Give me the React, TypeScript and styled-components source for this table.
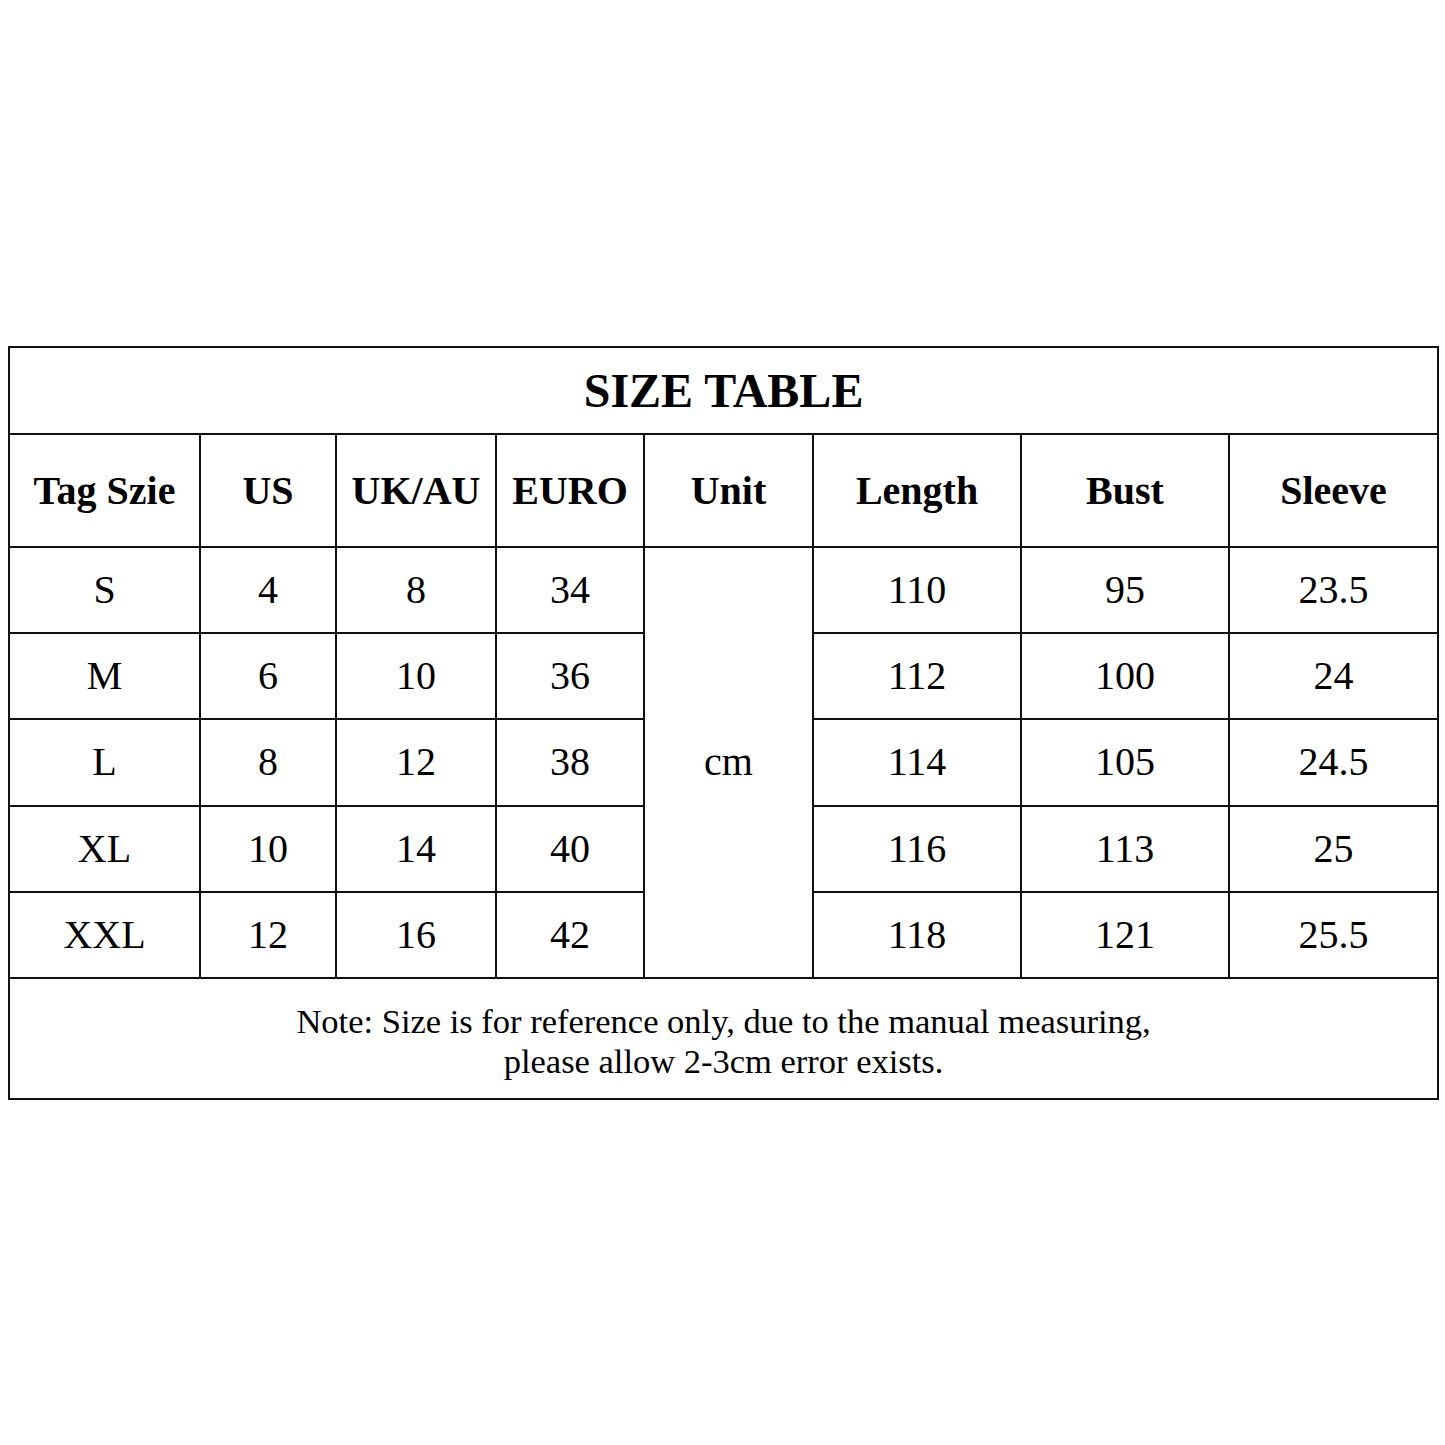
import React from 'react';
import styled, { createGlobalStyle } from 'styled-components';

interface SizeRow {
  tag: string;
  us: string;
  uk: string;
  euro: string;
  length: string;
  bust: string;
  sleeve: string;
}

const rows: SizeRow[] = [
  { tag: 'S', us: '4', uk: '8', euro: '34', length: '110', bust: '95', sleeve: '23.5' },
  { tag: 'M', us: '6', uk: '10', euro: '36', length: '112', bust: '100', sleeve: '24' },
  { tag: 'L', us: '8', uk: '12', euro: '38', length: '114', bust: '105', sleeve: '24.5' },
  { tag: 'XL', us: '10', uk: '14', euro: '40', length: '116', bust: '113', sleeve: '25' },
  { tag: 'XXL', us: '12', uk: '16', euro: '42', length: '118', bust: '121', sleeve: '25.5' },
];

const columnWidths = [191, 136, 160, 148, 169, 208, 208, 209];
const headers = ['Tag Szie', 'US', 'UK/AU', 'EURO', 'Unit', 'Length', 'Bust', 'Sleeve'];

const App: React.FC = () => {
  return (
    <>
      <GlobalStyle />
      <Page>
        <Table>
          <colgroup>
            {columnWidths.map((w, i) => (
              <col key={i} style={{ width: w }} />
            ))}
          </colgroup>
          <tbody>
            <TitleRow>
              <TitleCell colSpan={8}>SIZE TABLE</TitleCell>
            </TitleRow>
            <HeaderRow>
              {headers.map(h => (
                <HeaderCell key={h}>{h}</HeaderCell>
              ))}
            </HeaderRow>
            {rows.map((r, i) => (
              <DataRow key={r.tag}>
                <Cell>{r.tag}</Cell>
                <Cell>{r.us}</Cell>
                <Cell>{r.uk}</Cell>
                <Cell>{r.euro}</Cell>
                {i === 0 && <Cell rowSpan={rows.length}>cm</Cell>}
                <Cell>{r.length}</Cell>
                <Cell>{r.bust}</Cell>
                <Cell>{r.sleeve}</Cell>
              </DataRow>
            ))}
            <NoteRow>
              <NoteCell colSpan={8}>
                Note: Size is for reference only, due to the manual measuring,
                <br />
                please allow 2-3cm error exists.
              </NoteCell>
            </NoteRow>
          </tbody>
        </Table>
      </Page>
    </>
  );
};

const GlobalStyle = createGlobalStyle`
  html, body {
    margin: 0;
    padding: 0;
    background: #ffffff;
  }
  body {
    font-family: "Liberation Serif", "Times New Roman", serif;
    color: #000;
  }
`;

const Page = styled.div`
  width: 1445px;
  height: 1445px;
  box-sizing: border-box;
  padding: 346px 6px 0 8px;
`;

const Table = styled.table`
  width: 1429px;
  table-layout: fixed;
  border-collapse: collapse;
  border: 2px solid #111;
`;

const TitleRow = styled.tr`
  height: 87px;
`;

const HeaderRow = styled.tr`
  height: 113px;
`;

const DataRow = styled.tr`
  height: 86.2px;
`;

const NoteRow = styled.tr`
  height: 121px;
`;

const Cell = styled.td`
  border: 2px solid #111;
  padding: 0;
  text-align: center;
  vertical-align: middle;
  font-size: 40px;
  line-height: 1;
  white-space: nowrap;
`;

const HeaderCell = styled(Cell)`
  font-weight: bold;
`;

const TitleCell = styled(Cell)`
  font-weight: bold;
  font-size: 48px;
`;

const NoteCell = styled(Cell)`
  font-size: 34.5px;
  line-height: 40px;
  padding-top: 6px;
`;

export default App;
